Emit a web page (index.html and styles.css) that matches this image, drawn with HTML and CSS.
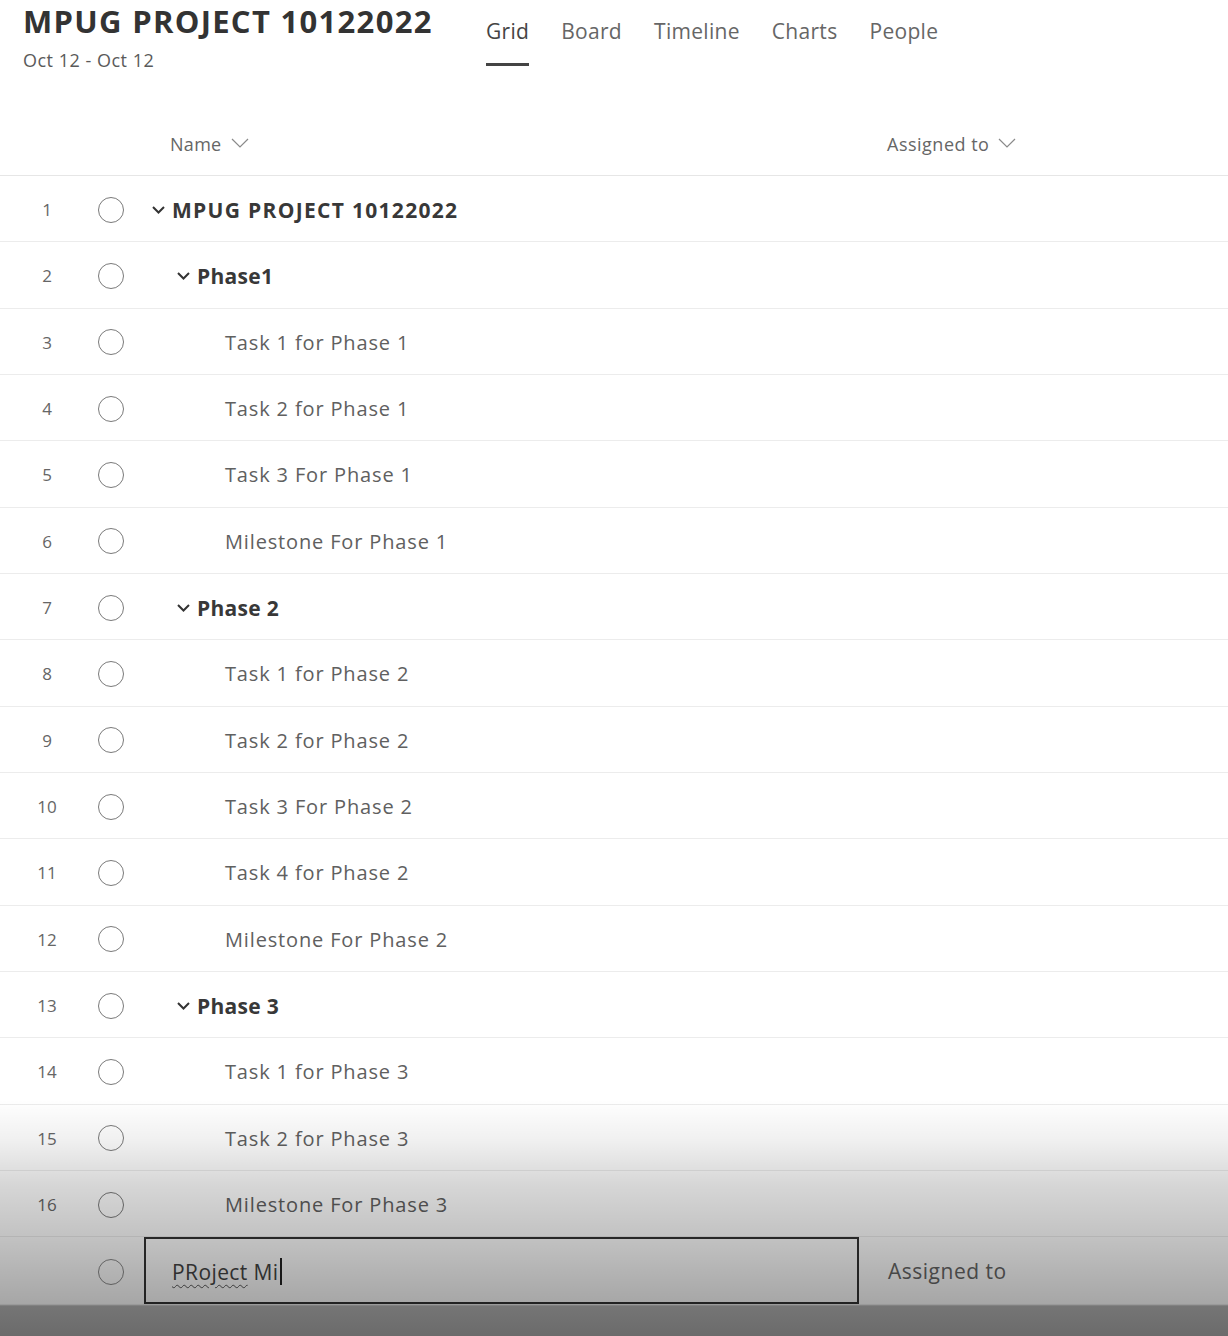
FILE: index.html
```html
<!DOCTYPE html>
<html>
<head>
<meta charset="utf-8">
<link rel="stylesheet" href="styles.css">
</head>
<body>
<div class="page">
  <header class="top">
    <div class="titleblock">
      <h1 class="title">MPUG PROJECT 10122022</h1>
      <div class="dates">Oct 12 - Oct 12</div>
    </div>
    <nav class="tabs">
      <span class="tab active">Grid</span>
      <span class="tab">Board</span>
      <span class="tab">Timeline</span>
      <span class="tab">Charts</span>
      <span class="tab">People</span>
    </nav>
  </header>

  <div class="grid">
    <div class="row head">
      <div class="num"></div>
      <div class="chk"></div>
      <div class="name hname">Name <svg class="hchev" width="18" height="10" viewBox="0 0 18 10"><polyline points="1,1 9,9 17,1" fill="none" stroke="#8a8a8a" stroke-width="1.2"/></svg></div>
      <div class="assign hname">Assigned to <svg class="hchev" width="18" height="10" viewBox="0 0 18 10"><polyline points="1,1 9,9 17,1" fill="none" stroke="#8a8a8a" stroke-width="1.2"/></svg></div>
    </div>

    <div class="row"><div class="num">1</div><div class="chk"><span class="circle"></span></div><div class="name l0 bold"><svg class="chev" width="13" height="8" viewBox="0 0 13 8"><polyline points="1,1 6.5,6.5 12,1" fill="none" stroke="#333" stroke-width="2"/></svg>MPUG PROJECT 10122022</div><div class="assign"></div></div>
    <div class="row"><div class="num">2</div><div class="chk"><span class="circle"></span></div><div class="name l1 bold"><svg class="chev" width="13" height="8" viewBox="0 0 13 8"><polyline points="1,1 6.5,6.5 12,1" fill="none" stroke="#333" stroke-width="2"/></svg>Phase1</div><div class="assign"></div></div>
    <div class="row"><div class="num">3</div><div class="chk"><span class="circle"></span></div><div class="name l2">Task 1 for Phase 1</div><div class="assign"></div></div>
    <div class="row"><div class="num">4</div><div class="chk"><span class="circle"></span></div><div class="name l2">Task 2 for Phase 1</div><div class="assign"></div></div>
    <div class="row"><div class="num">5</div><div class="chk"><span class="circle"></span></div><div class="name l2">Task 3 For Phase 1</div><div class="assign"></div></div>
    <div class="row"><div class="num">6</div><div class="chk"><span class="circle"></span></div><div class="name l2">Milestone For Phase 1</div><div class="assign"></div></div>
    <div class="row"><div class="num">7</div><div class="chk"><span class="circle"></span></div><div class="name l1 bold"><svg class="chev" width="13" height="8" viewBox="0 0 13 8"><polyline points="1,1 6.5,6.5 12,1" fill="none" stroke="#333" stroke-width="2"/></svg>Phase 2</div><div class="assign"></div></div>
    <div class="row"><div class="num">8</div><div class="chk"><span class="circle"></span></div><div class="name l2">Task 1 for Phase 2</div><div class="assign"></div></div>
    <div class="row"><div class="num">9</div><div class="chk"><span class="circle"></span></div><div class="name l2">Task 2 for Phase 2</div><div class="assign"></div></div>
    <div class="row"><div class="num">10</div><div class="chk"><span class="circle"></span></div><div class="name l2">Task 3 For Phase 2</div><div class="assign"></div></div>
    <div class="row"><div class="num">11</div><div class="chk"><span class="circle"></span></div><div class="name l2">Task 4 for Phase 2</div><div class="assign"></div></div>
    <div class="row"><div class="num">12</div><div class="chk"><span class="circle"></span></div><div class="name l2">Milestone For Phase 2</div><div class="assign"></div></div>
    <div class="row"><div class="num">13</div><div class="chk"><span class="circle"></span></div><div class="name l1 bold"><svg class="chev" width="13" height="8" viewBox="0 0 13 8"><polyline points="1,1 6.5,6.5 12,1" fill="none" stroke="#333" stroke-width="2"/></svg>Phase 3</div><div class="assign"></div></div>
    <div class="row"><div class="num">14</div><div class="chk"><span class="circle"></span></div><div class="name l2">Task 1 for Phase 3</div><div class="assign"></div></div>
    <div class="row"><div class="num">15</div><div class="chk"><span class="circle"></span></div><div class="name l2">Task 2 for Phase 3</div><div class="assign"></div></div>
    <div class="row"><div class="num">16</div><div class="chk"><span class="circle"></span></div><div class="name l2">Milestone For Phase 3</div><div class="assign"></div></div>

    <div class="row newrow">
      <div class="num"></div>
      <div class="chk"><span class="circle faint"></span></div>
      <div class="name input"><span class="typed"><span class="squiggle">PRoject</span> Mi</span><span class="caret"></span></div>
      <div class="assign placeholder">Assigned to</div>
    </div>
  </div>

  <div class="fade"></div>
</div>
</body>
</html>
```

FILE: styles.css
```css
html, body {
  margin: 0;
  padding: 0;
  background: #fff;
}
body {
  font-family: "Open Sans", "Noto Sans", sans-serif;
  color: #555;
}
.page {
  position: relative;
  width: 1228px;
  height: 1336px;
  overflow: hidden;
}
.top {
  display: flex;
  height: 110px;
}
.titleblock {
  padding-left: 23px;
  width: 440px;
  flex: none;
}
.title {
  margin: 0;
  padding-top: 1px;
  font-size: 31px;
  font-weight: 700;
  color: #333;
  line-height: 40px;
  letter-spacing: 1.3px;
}
.dates {
  margin-top: 7px;
  font-size: 18px;
  color: #5a5a5a;
  line-height: 24px;
  letter-spacing: 0.5px;
}
.tabs {
  display: flex;
  gap: 32px;
  margin-left: 23px;
  padding-top: 15px;
}
.tab {
  font-size: 21px;
  color: #666;
  line-height: 32px;
  height: 51px;
  letter-spacing: 0.3px;
  box-sizing: border-box;
}
.tab.active {
  color: #444;
  border-bottom: 3px solid #444;
}
.grid {
  display: flex;
  flex-direction: column;
}
.row {
  display: grid;
  grid-template-columns: 94px 50px 715px 1fr;
  height: 66.33px;
  box-sizing: border-box;
  border-bottom: 1px solid #ececec;
  align-items: center;
}
.row.head {
  height: 66px;
  border-bottom: 1px solid #e6e6e6;
}
.num {
  text-align: center;
  font-size: 17px;
  color: #666;
  padding-top: 2px;
}
.chk {
  display: flex;
  align-items: center;
  padding-left: 4px;
  padding-top: 2px;
}
.circle {
  width: 24px;
  height: 24px;
  border: 1.5px solid #7a7a7a;
  border-radius: 50%;
  box-sizing: content-box;
}
.circle.faint {
  border-color: #8a8a8a;
}
.name {
  display: flex;
  align-items: center;
  font-size: 20px;
  letter-spacing: 0.85px;
  color: #606060;
  height: 100%;
  padding-top: 2px;
  box-sizing: border-box;
}
.hname {
  font-size: 18px;
  letter-spacing: 0.3px;
  color: #666;
  padding-left: 26px;
  padding-top: 2px;
  gap: 9px;
}
.assign.hname {
  padding-left: 28px;
  letter-spacing: 0.5px;
  display: flex;
  align-items: center;
}
.hchev {
  margin-top: -2px;
}
.bold {
  font-weight: 700;
  color: #383838;
  font-size: 21px;
  letter-spacing: 0.3px;
}
.l0.bold {
  letter-spacing: 1.3px;
}
.chev {
  margin-right: 7px;
  flex: none;
}
.l0 { padding-left: 8px; }
.l1 { padding-left: 33px; }
.l2 { padding-left: 81px; }
.newrow {
  border-bottom: none;
}
.input {
  border: 2px solid #333;
  padding-left: 26px;
  height: 67px;
  font-size: 21px;
  letter-spacing: 0.4px;
}
.typed {
  color: #444;
}
.squiggle {
  text-decoration: underline wavy #555;
  text-decoration-thickness: 1px;
  text-underline-offset: 4px;
}
.caret {
  display: inline-block;
  width: 2px;
  height: 27px;
  background: #222;
  margin-left: 1px;
}
.placeholder {
  padding-left: 29px;
  font-size: 21px;
  letter-spacing: 0.5px;
  color: #666;
}
.fade {
  position: absolute;
  left: 0;
  right: 0;
  top: 1100px;
  bottom: 0;
  pointer-events: none;
  background: linear-gradient(to bottom,
    rgba(0,0,0,0) 0px,
    rgba(0,0,0,0.06) 40px,
    rgba(0,0,0,0.16) 85px,
    rgba(0,0,0,0.24) 137px,
    rgba(0,0,0,0.30) 175px,
    rgba(0,0,0,0.35) 204px,
    rgba(0,0,0,0.54) 206px,
    rgba(0,0,0,0.58) 236px);
}
```
